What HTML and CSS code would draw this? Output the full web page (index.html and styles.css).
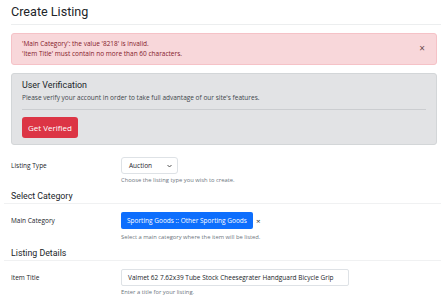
FILE: index.html
```html
<!DOCTYPE html>
<html lang="en">
<head>
  <meta charset="UTF-8">
  <title>Create Listing</title>
  <link rel="stylesheet" href="styles.css">
</head>
<body>
  <main class="page">
    <h1 class="page-title">Create Listing</h1>

    <div class="alert-error">
      <div class="alert-text">
        <div>'Main Category': the value '8218' is invalid.</div>
        <div>'Item Title' must contain no more than 60 characters.</div>
      </div>
      <span class="alert-close">&times;</span>
    </div>

    <div class="verify-card">
      <h2 class="verify-title">User Verification</h2>
      <p class="verify-text">Please verify your account in order to take full advantage of our site's features.</p>
      <div class="verify-rule"></div>
      <button class="btn-verify">Get Verified</button>
    </div>

    <div class="form-row">
      <label class="form-label">Listing Type</label>
      <div class="form-control-col">
        <div class="select-box">
          <span>Auction</span>
          <svg class="caret" width="5" height="4" viewBox="0 0 10 8"><path d="M1 2l4 4 4-4" fill="none" stroke="#444" stroke-width="1.8"/></svg>
        </div>
        <div class="help">Choose the listing type you wish to create.</div>
      </div>
    </div>

    <h3 class="section-title">Select Category</h3>
    <div class="form-row">
      <label class="form-label">Main Category</label>
      <div class="form-control-col">
        <div class="cat-line">
          <span class="cat-chip">Sporting Goods :: Other Sporting Goods</span>
          <span class="cat-remove">&times;</span>
        </div>
        <div class="help">Select a main category where the item will be listed.</div>
      </div>
    </div>

    <h3 class="section-title">Listing Details</h3>
    <div class="form-row">
      <label class="form-label">Item Title</label>
      <div class="form-control-col">
        <div class="text-input">Valmet 62 7.62x39 Tube Stock Cheesegrater Handguard Bicycle Grip</div>
        <div class="help">Enter a title for your listing.</div>
      </div>
    </div>
  </main>
</body>
</html>
```

FILE: styles.css
```css
body {
  margin: 0;
  font-family: "Open Sans", "Noto Sans", sans-serif;
  color: #212529;
  background: #fff;
}

.page {
  padding: 0 4px 0 11px;
}

/* headings */
.page-title {
  font-family: Roboto, "Open Sans", sans-serif;
  font-size: 12.6px;
  font-weight: 400;
  margin: 0 -4px 0 0;
  height: 24px;
  line-height: 23px;
  border-bottom: 1px solid #eceeef;
}

.section-title {
  font-family: Roboto, "Open Sans", sans-serif;
  font-size: 8.8px;
  font-weight: 400;
  margin: 5px -4px 0 -7px;
  padding-left: 7px;
  line-height: 14px;
  border-bottom: 1px solid #f0f1f2;
}

/* alert */
.alert-error {
  margin-top: 8px;
  height: 32px;
  box-sizing: border-box;
  background: #f8d7da;
  border: 1px solid #f5c2c7;
  border-radius: 3px;
  color: #842029;
  display: flex;
  align-items: center;
  justify-content: space-between;
  padding: 0 10px;
}

.alert-text {
  font-size: 6.5px;
  line-height: 10px;
}

.alert-close {
  font-size: 10px;
  color: #6a4a4e;
  padding-right: 1px;
  margin-top: -3px;
}

/* verification card */
.verify-card {
  margin-top: 8px;
  height: 72px;
  box-sizing: border-box;
  background: #e2e3e5;
  border: 1px solid #d3d6d8;
  border-radius: 3px;
  padding: 4px 10px 5px;
}

.verify-title {
  font-family: Roboto, "Open Sans", sans-serif;
  font-size: 8.9px;
  font-weight: 400;
  margin: 0;
  line-height: 14px;
}

.verify-text {
  font-size: 6.5px;
  color: #41464b;
  margin: 1px 0 0;
  line-height: 10px;
}

.verify-rule {
  border-top: 1px solid #cbcdd0;
  margin: 6px 0 7px;
}

.btn-verify {
  display: block;
  font-family: inherit;
  font-size: 8px;
  color: #fff;
  background: #dc3545;
  border: none;
  border-radius: 3px;
  width: 56px;
  height: 21px;
  padding: 0;
}

/* form rows */
.form-row {
  display: flex;
  margin-top: 12px;
}

.section-title + .form-row {
  margin-top: 8px;
}

.form-label {
  width: 110px;
  flex-shrink: 0;
  font-size: 6.5px;
  line-height: 17px;
}

.form-control-col {
  display: flex;
  flex-direction: column;
}

.select-box {
  width: 57px;
  height: 17px;
  box-sizing: border-box;
  border: 1px solid #dee2e6;
  border-radius: 3px;
  font-size: 6.5px;
  line-height: 15px;
  padding: 0 5px 0 7px;
  display: flex;
  align-items: center;
  justify-content: space-between;
}

.help {
  font-size: 5.8px;
  color: #6c757d;
  margin-top: 2px;
  line-height: 8px;
}

.cat-line + .help {
  margin-top: 4px;
}

.cat-line {
  display: flex;
  align-items: center;
}

.cat-chip {
  background: #0d6efd;
  color: #fff;
  font-size: 6.5px;
  height: 17px;
  line-height: 17px;
  width: 132px;
  box-sizing: border-box;
  padding: 0 6px;
  border-radius: 2px;
  white-space: nowrap;
}

.cat-remove {
  font-size: 8px;
  margin-left: 3px;
  color: #333;
}

.text-input {
  width: 228px;
  height: 17px;
  box-sizing: border-box;
  border: 1px solid #dee2e6;
  border-radius: 2px;
  font-size: 6.5px;
  line-height: 15px;
  padding-left: 6px;
  white-space: nowrap;
  overflow: hidden;
}
```
